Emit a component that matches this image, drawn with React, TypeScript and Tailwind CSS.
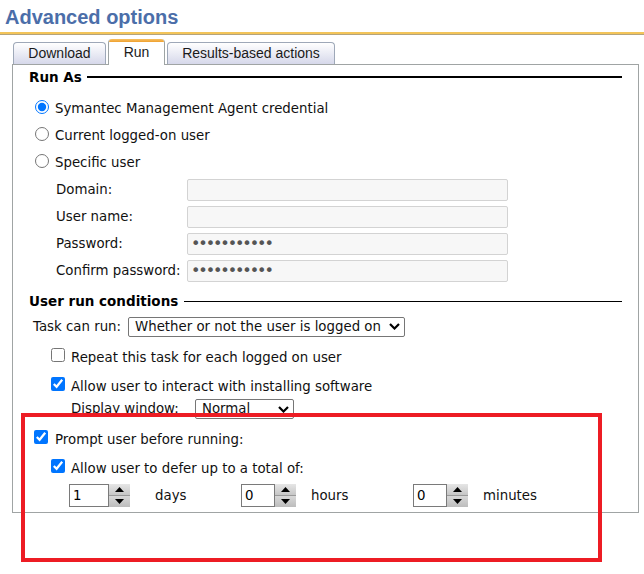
import React from "react";

const Spin = ({ value, w }: { value: string; w: string }) => (
  <div className="flex h-[23px]">
    <div className={`${w} h-[23px] border border-[#7a7a7a] bg-white pl-[3px] text-[13.33px] leading-[21px] text-black`}>{value}</div>
    <div className="flex h-[23px] w-[21px] flex-col">
      <div className="flex h-[12px] items-center justify-center border-b border-[#9a9a9a] bg-linear-to-b from-[#e6e6e6] to-[#c6c6c6]">
        <svg width="9" height="5" viewBox="0 0 9 5">
          <path d="M4.5 0 L9 5 L0 5 Z" fill="#000" />
        </svg>
      </div>
      <div className="flex h-[11px] items-center justify-center bg-linear-to-b from-[#d8d8d8] to-[#bcbcbc]">
        <svg width="9" height="5" viewBox="0 0 9 5">
          <path d="M0 0 L9 0 L4.5 5 Z" fill="#000" />
        </svg>
      </div>
    </div>
  </div>
);

const Chevron = () => (
  <svg width="11" height="7" viewBox="0 0 11 7">
    <path d="M1 1 L5.5 5.5 L10 1" fill="none" stroke="#000" strokeWidth="2.2" />
  </svg>
);

export default function App() {
  return (
    <div className="relative h-[574px] w-[644px] overflow-hidden bg-white font-['DejaVu_Sans',sans-serif] text-[13.33px] text-[#111]">
      <div className="h-[32px] pl-[5px] pt-[6px] font-['Liberation_Sans',Arial,sans-serif] text-[20px] font-bold leading-[22px] text-[#4b6ea9]">
        Advanced options
      </div>
      <div className="h-[2px] bg-[#f3c459]" />
      <div className="h-[1px] bg-[#b4a47c]" />

      <div className="ml-[13px] mt-[4px] flex h-[25px] items-end gap-[2px] font-['Liberation_Sans',Arial,sans-serif] text-[14px] text-[#1a1a1a]">
        <div className="flex h-[22px] w-[93px] items-center justify-center rounded-t-[4px] border border-b-0 border-[#9ea8b8] bg-linear-to-b from-white to-[#d6d8ea]">
          Download
        </div>
        <div className="relative z-10 -mb-[1px] flex h-[26px] w-[57px] flex-col overflow-hidden rounded-t-[4px] border-x border-[#9ea4a4] bg-white">
          <div className="h-[3px] bg-linear-to-b from-[#f8c060] to-[#eea02c]" />
          <div className="flex flex-1 items-center justify-center pb-[2px]">Run</div>
        </div>
        <div className="flex h-[22px] w-[168px] items-center justify-center rounded-t-[4px] border border-b-0 border-[#9ea8b8] bg-linear-to-b from-white to-[#d6d8ea]">
          Results-based actions
        </div>
      </div>

      <div className="ml-[12px] h-[449px] w-[627px] border border-[#a0a4a4]">
        <div className="mt-[2px] flex h-[20px] items-center pl-[16px] pr-[16px]">
          <span className="text-[13.5px] font-bold text-black">Run As</span>
          <div className="ml-[5px] h-[2px] flex-1 bg-black" />
        </div>

        <div className="mt-[7px]">
          <label className="flex h-[27px] items-center pl-[22px] pt-[2px]">
            <input type="radio" name="runas" defaultChecked className="m-0 mb-[4px] h-[14px] w-[14px]" />
            <span className="ml-[6px]">Symantec Management Agent credential</span>
          </label>
          <label className="flex h-[27px] items-center pl-[22px] pt-[2px]">
            <input type="radio" name="runas" className="m-0 mb-[4px] h-[14px] w-[14px]" />
            <span className="ml-[6px]">Current logged-on user</span>
          </label>
          <label className="flex h-[27px] items-center pl-[22px] pt-[2px]">
            <input type="radio" name="runas" className="m-0 mb-[4px] h-[14px] w-[14px]" />
            <span className="ml-[6px]">Specific user</span>
          </label>
        </div>

        <div className="mt-[1px]">
          <div className="flex h-[27px] items-center pl-[43px]">
            <span className="w-[131px]">Domain:</span>
            <div className="h-[22px] w-[321px] rounded-[2px] border border-[#d3d3d3] bg-[#f7f7f7]" />
          </div>
          <div className="flex h-[27px] items-center pl-[43px]">
            <span className="w-[131px]">User name:</span>
            <div className="h-[22px] w-[321px] rounded-[2px] border border-[#d3d3d3] bg-[#f7f7f7]" />
          </div>
          <div className="flex h-[27px] items-center pl-[43px]">
            <span className="w-[131px]">Password:</span>
            <div className="flex h-[22px] w-[321px] items-center rounded-[2px] border border-[#d3d3d3] bg-[#f7f7f7] pl-[3px] text-[16px] leading-none tracking-[-2.1px] text-[#555]">
              •••••••••••
            </div>
          </div>
          <div className="flex h-[27px] items-center pl-[43px]">
            <span className="w-[131px]">Confirm password:</span>
            <div className="flex h-[22px] w-[321px] items-center rounded-[2px] border border-[#d3d3d3] bg-[#f7f7f7] pl-[3px] text-[16px] leading-none tracking-[-2.1px] text-[#555]">
              •••••••••••
            </div>
          </div>
        </div>

        <div className="mt-[7px] flex h-[20px] items-center pl-[16px] pr-[16px]">
          <span className="text-[13.5px] font-bold text-black">User run conditions</span>
          <div className="ml-[6px] h-[1px] flex-1 bg-black" />
        </div>

        <div className="mt-[2px] flex h-[27px] items-center pl-[20px]">
          <span className="w-[95px]">Task can run:</span>
          <div className="flex h-[20px] w-[277px] items-center justify-between rounded-[2px] border border-[#767676] pl-[6px] pr-[4px]">
            <span>Whether or not the user is logged on</span>
            <Chevron />
          </div>
        </div>

        <label className="mt-[1px] flex h-[30px] items-center pl-[38px] pt-[3px]">
          <input type="checkbox" className="m-0 mb-[5px] h-[14px] w-[14px]" />
          <span className="ml-[6px]">Repeat this task for each logged on user</span>
        </label>
        <label className="flex h-[28px] items-center pl-[38px] pt-[3px]">
          <input type="checkbox" defaultChecked className="m-0 mb-[5px] h-[14px] w-[14px]" />
          <span className="ml-[6px]">Allow user to interact with installing software</span>
        </label>
        <div className="flex h-[20px] items-center pl-[58px]">
          <span className="w-[124px]">Display window:</span>
          <div className="flex h-[20px] w-[99px] items-center justify-between rounded-[2px] border border-[#767676] pl-[6px] pr-[4px]">
            <span>Normal</span>
            <Chevron />
          </div>
        </div>

        <label className="mt-[4px] flex h-[30px] items-center pl-[21px] pt-[3px]">
          <input type="checkbox" defaultChecked className="m-0 mb-[5px] h-[14px] w-[14px]" />
          <span className="ml-[7px]">Prompt user before running:</span>
        </label>
        <label className="flex h-[28px] items-center pl-[38px] pt-[3px]">
          <input type="checkbox" defaultChecked className="m-0 mb-[5px] h-[14px] w-[14px]" />
          <span className="ml-[6px]">Allow user to defer up to a total of:</span>
        </label>
        <div className="flex h-[29px] items-center pl-[56px]">
          <div className="flex w-[172px] items-center">
            <Spin value="1" w="w-[40px]" />
            <span className="ml-[25px]">days</span>
          </div>
          <div className="flex w-[172px] items-center">
            <Spin value="0" w="w-[34px]" />
            <span className="ml-[15px]">hours</span>
          </div>
          <div className="flex items-center">
            <Spin value="0" w="w-[34px]" />
            <span className="ml-[15px]">minutes</span>
          </div>
        </div>
      </div>

      <div className="pointer-events-none absolute left-[21px] top-[413px] h-[149px] w-[581px] border-[4px] border-[#ed1c24]" />
    </div>
  );
}
